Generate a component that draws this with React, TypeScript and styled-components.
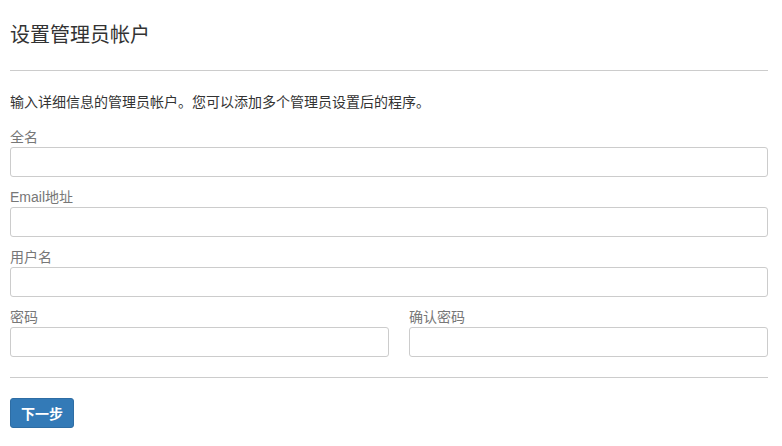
import React from "react";
import styled, { createGlobalStyle } from "styled-components";

const GlobalStyle = createGlobalStyle`
  html, body { margin: 0; padding: 0; background: #fff; }
  body {
    font-family: "Liberation Sans", Arial, "Noto Sans CJK SC", sans-serif;
    color: #333;
  }
  * { box-sizing: border-box; }
`;

const Page = styled.div`
  padding: 20px 14px 0 10px;
`;

const Title = styled.h3`
  margin: 0;
  font-size: 20px;
  line-height: 30px;
  font-weight: 400;
  color: #333;
`;

const Divider = styled.hr<{ $top?: number; $bottom?: number }>`
  margin: ${(p) => p.$top ?? 20}px 0 ${(p) => p.$bottom ?? 20}px;
  border: 0;
  border-top: 1px solid #ccc;
  height: 0;
`;

const Intro = styled.p`
  margin: 21px 0 15px;
  font-size: 14px;
  line-height: 20px;
  color: #333;
`;

const Field = styled.div<{ $pad?: boolean }>`
  display: flex;
  flex-direction: column;
  margin-bottom: 10px;
  padding-left: ${(p) => (p.$pad ? "20px" : "0")};
`;

const Label = styled.label`
  font-size: 14px;
  line-height: 20px;
  color: #777;
`;

const Input = styled.input`
  height: 30px;
  width: 100%;
  border: 1px solid #ccc;
  border-radius: 3px;
  padding: 4px 8px;
  font: inherit;
  font-size: 14px;
  outline: none;
  background: #fff;
`;

const Row = styled.div`
  display: grid;
  grid-template-columns: 1fr 1fr;
`;

const Button = styled.button`
  height: 30px;
  padding: 0 10px;
  background: #337ab7;
  border: 1px solid #2e6da4;
  border-radius: 3px;
  color: #fff;
  font-family: "Liberation Sans", Arial, "Noto Sans CJK SC", sans-serif;
  font-size: 14px;
  font-weight: 700;
  cursor: pointer;
`;

const Form = styled.form`
  display: flex;
  flex-direction: column;
`;

const Footer = styled.div`
  display: flex;
`;

export default function App() {
  return (
    <>
      <GlobalStyle />
      <Page>
        <Title>设置管理员帐户</Title>
        <Divider $bottom={0} />
        <Intro>输入详细信息的管理员帐户。您可以添加多个管理员设置后的程序。</Intro>
        <Form onSubmit={(e) => e.preventDefault()}>
          <Field>
            <Label>全名</Label>
            <Input type="text" />
          </Field>
          <Field>
            <Label>Email地址</Label>
            <Input type="text" />
          </Field>
          <Field>
            <Label>用户名</Label>
            <Input type="text" />
          </Field>
          <Row>
            <Field>
              <Label>密码</Label>
              <Input type="password" />
            </Field>
            <Field $pad>
              <Label>确认密码</Label>
              <Input type="password" />
            </Field>
          </Row>
          <Divider $top={10} $bottom={20} />
          <Footer>
            <Button type="submit">下一步</Button>
          </Footer>
        </Form>
      </Page>
    </>
  );
}
